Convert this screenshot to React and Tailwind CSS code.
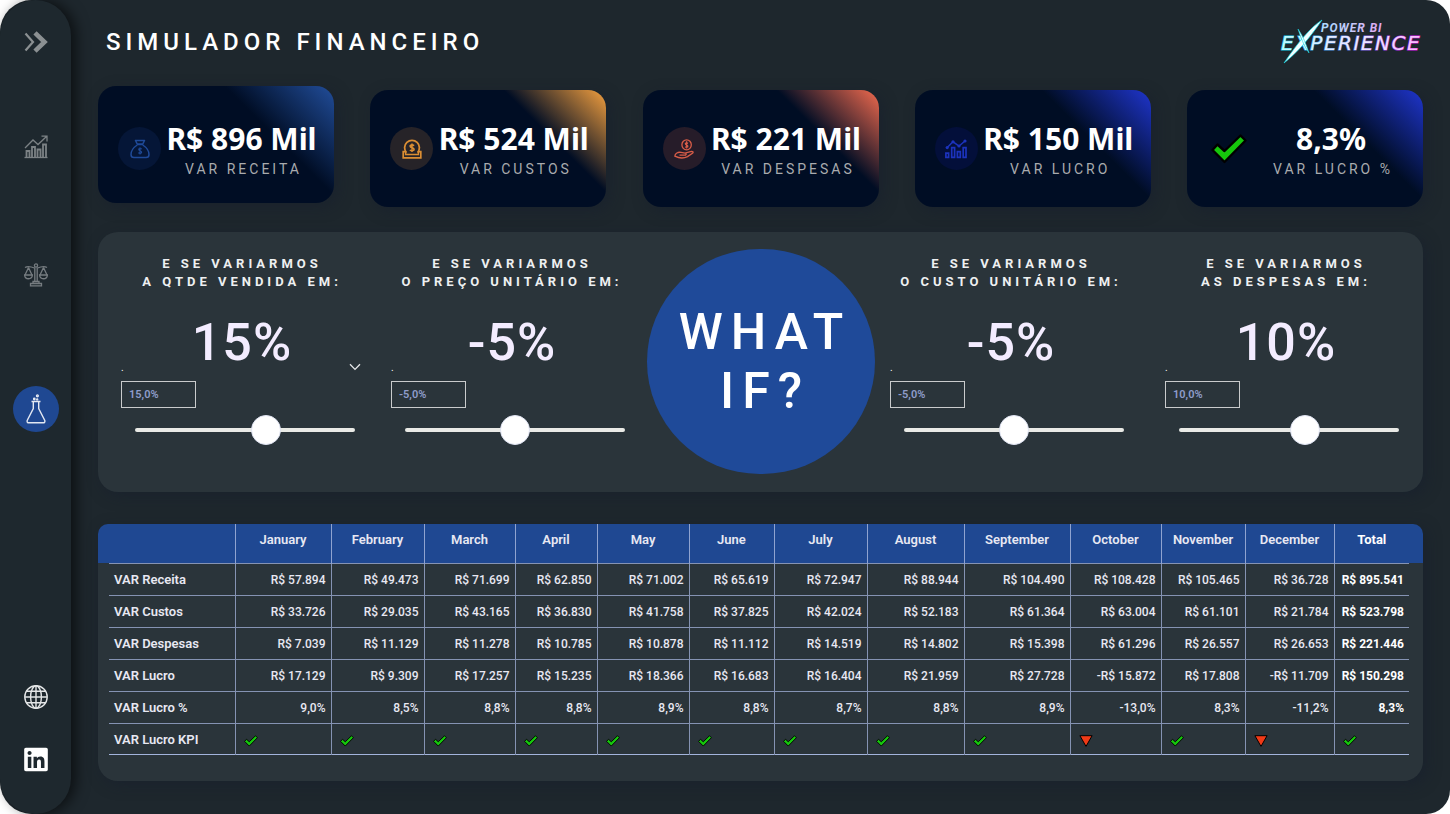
import React, { useState } from "react";
import { FaLinkedin } from "react-icons/fa";

/* ---------- icons ---------- */

function DoubleChevron() {
  return (
    <svg viewBox="0 0 24 22" className="h-[22px] w-6" fill="none" stroke="#8b9092">
      <path d="M1.5 2.5 L9 11 L1.5 19.5" strokeWidth="2.2" />
      <path d="M11 1.8 L20.5 11 L11 20.2" strokeWidth="4.6" />
    </svg>
  );
}

function GrowthIcon() {
  return (
    <svg viewBox="0 0 24 24" className="h-6 w-6" fill="none" stroke="#7c8285" strokeWidth="1.3">
      <path d="M0.5 22.5 H23.5" />
      <path d="M2.5 22 V16 H5.5 V22 M8 22 V12 H11 V22 M13.5 22 V14.5 H16.5 V22 M19 22 V9.5 H22 V22" strokeWidth="1.8" />
      <path d="M1 13 L9 5 L14 9.5 L22.5 1.5 M17.5 1.2 H23 V6.5" />
    </svg>
  );
}

function BalanceIcon() {
  return (
    <svg viewBox="0 0 24 24" className="h-6 w-6" fill="none" stroke="#767c80" strokeWidth="1.3">
      <circle cx="12" cy="2.5" r="1.6" />
      <path d="M10.8 4.5 V18 M13.2 4.5 V18 M9 18.5 H15 V20.5 H9 Z M6.5 20.5 H17.5 V22.8 H6.5 Z" />
      <path d="M1 4.5 C4 2.5 7 3.5 10.5 5 M23 4.5 C20 2.5 17 3.5 13.5 5" />
      <path d="M4.5 4.5 L1 12 M4.5 4.5 L8 12 M19.5 4.5 L16 12 M19.5 4.5 L23 12" />
      <path d="M0.6 12 H8.4 C8 17 1 17 0.6 12 Z M15.6 12 H23.4 C23 17 16 17 15.6 12 Z" />
    </svg>
  );
}

function FlaskIcon() {
  return (
    <svg viewBox="0 0 24 32" className="h-8 w-6" fill="none" stroke="#e3e8f2" strokeWidth="1.4">
      <path d="M7.5 8.5 H16.5 M9.3 9 V15.5 L3.2 27.5 Q2.6 29.8 5 29.8 H19 Q21.4 29.8 20.8 27.5 L14.7 15.5 V9" />
      <circle cx="10.3" cy="6" r="0.7" />
      <circle cx="13.4" cy="2.8" r="0.9" />
      <circle cx="13.2" cy="6.4" r="0.5" />
    </svg>
  );
}

function GlobeIcon() {
  return (
    <svg viewBox="0 0 24 24" className="h-6 w-6" fill="none" stroke="#e4e6e7" strokeWidth="1.4">
      <circle cx="12" cy="12" r="11.2" />
      <ellipse cx="12" cy="12" rx="5.4" ry="11.2" />
      <path d="M12 0.8 V23.2 M0.8 12 H23.2 M2.5 6.2 H21.5 M2.5 17.8 H21.5" />
    </svg>
  );
}

function MoneyBagIcon() {
  return (
    <svg viewBox="0 0 20 20" className="h-5 w-5" fill="none" stroke="#1f4a98" strokeWidth="1.5" strokeLinejoin="round">
      <path d="M5.5 1.5 H14.5 L12.8 5 H7.2 Z M6.8 5.6 H13.2" />
      <path d="M7.2 6 C3.5 8.5 1 12.5 1 15.5 Q1 18.6 4 18.6 H16 Q19 18.6 19 15.5 C19 12.5 16.5 8.5 12.8 6" />
      <path d="M11.8 10 Q10 8.9 8.7 10 C8 12.2 12 11.3 11.6 13.6 Q10.4 15 8.3 13.8 M10 8.3 V15.6" strokeWidth="1.1" />
    </svg>
  );
}

function CoinSlotIcon() {
  return (
    <svg viewBox="0 0 20 20" className="h-5 w-5" fill="none" stroke="#db8e33" strokeWidth="1.5">
      <path d="M4.4 13.6 A7.4 7.4 0 1 1 15.6 13.6" strokeWidth="1.8" />
      <path d="M3 12.6 H1.2 V18.8 H18.8 V12.6 H17" strokeWidth="1.7" />
      <path d="M3.6 12.8 V15.5 H16.4 V12.8" />
      <path d="M12.2 6.6 Q10 5.2 8.2 6.5 C7.2 9.4 12.8 8.2 12 11 Q10.3 12.6 7.8 11.2 M10 4.4 V13" strokeWidth="1.5" />
    </svg>
  );
}

function HandCoinIcon() {
  return (
    <svg viewBox="0 0 20 20" className="h-5 w-5" fill="none" stroke="#d85d48" strokeWidth="1.3">
      <ellipse cx="12.6" cy="5.8" rx="4.7" ry="5" />
      <path d="M14 4.4 Q12.4 3.3 11.4 4.5 C11.2 6.6 14.4 5.8 13.8 7.8 Q12.6 8.8 11.2 7.8 M12.6 2.2 V9.6" strokeWidth="1.3" />
      <path d="M0.8 17.2 C1 14.2 4 12.8 7 13.4 L11 14.2 L17.5 12.4 Q19.8 12.4 18.8 14 L13.5 17.6 C10 19.4 5 19.2 0.8 17.2 Z M5.5 16.2 H11.5 L12.5 14.6" />
    </svg>
  );
}

function ProfitIcon() {
  return (
    <svg viewBox="0 0 22 20" className="h-5 w-[22px]" fill="none" stroke="#1c33bd" strokeWidth="1.5">
      <path d="M2 8.8 L8 2.8 L14 7 L20 2" />
      <g fill="#1c33bd" stroke="none">
        <circle cx="2.2" cy="8.6" r="1.6" />
        <circle cx="8" cy="2.8" r="1.6" />
        <circle cx="14" cy="7" r="1.6" />
        <circle cx="20" cy="2" r="1.6" />
      </g>
      <path d="M0.9 14.2 H3.6 V18.4 H0.9 Z M6.7 8.6 H9.6 V18.4 H6.7 Z M12.4 12.6 H15.3 V18.4 H12.4 Z M18.2 8.6 H21 V18.4 H18.2 Z" strokeWidth="1.7" />
    </svg>
  );
}

function Check({ className }) {
  return (
    <svg viewBox="0 0 36 30" className={className} role="img" aria-label="Acima da meta">
      <path d="M1.5 16 L6.5 10.5 L13.5 17 L29.5 1.5 L34.5 6.5 L13.5 28 Z" fill="#16c60c" stroke="#000000" strokeWidth="2.4" strokeLinejoin="round" />
    </svg>
  );
}

function DownTriangle() {
  return (
    <svg viewBox="0 0 14 12" className="h-3 w-3.5" role="img" aria-label="Abaixo da meta">
      <path d="M0.9 0.7 H13.1 L7 11.4 Z" fill="#f03a17" stroke="#000000" strokeWidth="1" />
    </svg>
  );
}

function Logo() {
  return (
    <svg viewBox="0 0 144 46" className="h-[46px] w-36" role="img" aria-label="Power BI Experience">
      <defs>
        <linearGradient id="neon" gradientUnits="userSpaceOnUse" x1="0" y1="0" x2="144" y2="0">
          <stop offset="0" stopColor="#b9fbff" />
          <stop offset="0.35" stopColor="#e4ecff" />
          <stop offset="0.7" stopColor="#efe2ff" />
          <stop offset="1" stopColor="#f9b8fb" />
        </linearGradient>
        <linearGradient id="glow" gradientUnits="userSpaceOnUse" x1="0" y1="0" x2="144" y2="0">
          <stop offset="0" stopColor="#12d8e6" />
          <stop offset="0.5" stopColor="#6a7fe0" />
          <stop offset="1" stopColor="#e808e8" />
        </linearGradient>
        <linearGradient id="tagline" gradientUnits="userSpaceOnUse" x1="41" y1="0" x2="102" y2="0">
          <stop offset="0" stopColor="#a9dcff" />
          <stop offset="0.6" stopColor="#c9c4f8" />
          <stop offset="1" stopColor="#e2a6f2" />
        </linearGradient>
      </defs>
      <text x="2" y="31" fontSize="20" fontFamily="'DejaVu Sans', sans-serif" fontStyle="italic" letterSpacing="1.5" fill="url(#neon)" stroke="url(#glow)" strokeWidth="1" paintOrder="stroke">EXPERIENCE</text>
      <text x="42" y="13" fontSize="12" fontFamily="Roboto, sans-serif" fontStyle="italic" fontWeight="700" letterSpacing="1" fill="url(#tagline)">POWER BI</text>
      <path d="M43 1 C32 8 20 22 5 44 C18 34 30 20 43 1 Z" fill="#f2ffff" stroke="#12d8e6" strokeWidth="0.7" />
      <path d="M19 10 C22 19 25 27 30 34 C27 25 24 17 19 10 Z" fill="#f2ffff" stroke="#12d8e6" strokeWidth="0.6" />
    </svg>
  );
}

/* ---------- data ---------- */

const cards = [
  { value: "R$ 896 Mil", label: "VAR RECEITA", Icon: MoneyBagIcon, disc: "bg-[#051637]", glow: "self-start pt-2 bg-[linear-gradient(45deg,#000d24_69%,#1e478f_97%)]" },
  { value: "R$ 524 Mil", label: "VAR CUSTOS", Icon: CoinSlotIcon, disc: "bg-[#262328]", glow: "self-end bg-[linear-gradient(45deg,#000d24_71%,#db913c_97%)]" },
  { value: "R$ 221 Mil", label: "VAR DESPESAS", Icon: HandCoinIcon, disc: "bg-[#261c29]", glow: "self-end bg-[linear-gradient(45deg,#000d24_71%,#d9614a_97%)]" },
  { value: "R$ 150 Mil", label: "VAR LUCRO", Icon: ProfitIcon, disc: "bg-[#030f3a]", glow: "self-end bg-[linear-gradient(45deg,#000d24_69%,#1c31bd_97%)]" },
  { value: "8,3%", label: "VAR LUCRO %", Icon: null, disc: "", glow: "self-end bg-[linear-gradient(45deg,#000d24_69%,#1c31bd_97%)]" },
];

const months = ["January", "February", "March", "April", "May", "June", "July", "August", "September", "October", "November", "December", "Total"];

const columnWidths = [
  "w-[126px]", "w-[96px]", "w-[93px]", "w-[91px]", "w-[82px]", "w-[92px]", "w-[85px]",
  "w-[93px]", "w-[97px]", "w-[106px]", "w-[91px]", "w-[84px]", "w-[89px]", "w-[75px]",
];

const rows = [
  ["VAR Receita", "R$ 57.894", "R$ 49.473", "R$ 71.699", "R$ 62.850", "R$ 71.002", "R$ 65.619", "R$ 72.947", "R$ 88.944", "R$ 104.490", "R$ 108.428", "R$ 105.465", "R$ 36.728", "R$ 895.541"],
  ["VAR Custos", "R$ 33.726", "R$ 29.035", "R$ 43.165", "R$ 36.830", "R$ 41.758", "R$ 37.825", "R$ 42.024", "R$ 52.183", "R$ 61.364", "R$ 63.004", "R$ 61.101", "R$ 21.784", "R$ 523.798"],
  ["VAR Despesas", "R$ 7.039", "R$ 11.129", "R$ 11.278", "R$ 10.785", "R$ 10.878", "R$ 11.112", "R$ 14.519", "R$ 14.802", "R$ 15.398", "R$ 61.296", "R$ 26.557", "R$ 26.653", "R$ 221.446"],
  ["VAR Lucro", "R$ 17.129", "R$ 9.309", "R$ 17.257", "R$ 15.235", "R$ 18.366", "R$ 16.683", "R$ 16.404", "R$ 21.959", "R$ 27.728", "-R$ 15.872", "R$ 17.808", "-R$ 11.709", "R$ 150.298"],
  ["VAR Lucro %", "9,0%", "8,5%", "8,8%", "8,8%", "8,9%", "8,8%", "8,7%", "8,8%", "8,9%", "-13,0%", "8,3%", "-11,2%", "8,3%"],
];

const kpi = [true, true, true, true, true, true, true, true, true, false, true, false, true];

/* ---------- parts ---------- */

function NavButton({ label, active, children }) {
  return (
    <button
      type="button"
      aria-label={label}
      className={
        active
          ? "flex h-[46px] w-[46px] items-center justify-center rounded-full bg-[#1f4892]"
          : "flex h-[46px] w-[46px] items-center justify-center rounded-full"
      }
    >
      {children}
    </button>
  );
}

function Card({ value, label, Icon, disc, glow }) {
  return (
    <article className={`flex h-[117px] w-[236px] items-center rounded-[18px] pl-5 pr-3 shadow-[4px_4px_14px_rgba(22,30,46,0.5)] ${glow}`}>
      {Icon ? (
        <span className={`flex h-[43px] w-[43px] shrink-0 items-center justify-center rounded-full ${disc}`}>
          <Icon />
        </span>
      ) : (
        <Check className="ml-1 mr-1 h-[30px] w-9 shrink-0" />
      )}
      <div className="flex grow flex-col items-center pt-1 whitespace-nowrap">
        <p className="font-['Noto_Sans',sans-serif] text-[30px] leading-9 font-bold text-white">{value}</p>
        <p className="pl-1 text-sm leading-6 tracking-[3px] text-[#a9abae]">{label}</p>
      </div>
    </article>
  );
}

function Scenario({ id, first, second, initial, expandable }) {
  const [amount, setAmount] = useState(initial);
  return (
    <section className="flex w-full max-w-[242px] flex-col">
      <h2 className="pt-[23px] text-center text-[13px] leading-[18px] font-bold tracking-[4px] whitespace-nowrap text-[#eef0f1]">
        {first}
        <br />
        {second}
      </h2>
      <p className="mt-7 text-center text-[52px] leading-[48px] font-medium tracking-[1px] text-[#f3ecff]">{amount}%</p>
      <div className="-mt-2 flex h-4 items-end justify-between">
        <label htmlFor={`${id}-value`} className="text-[10px] leading-[14px] text-white">.</label>
        {expandable && (
          <button type="button" aria-label="Opções" className="mr-0.5 flex h-4 w-3 items-center justify-center">
            <svg viewBox="0 0 12 8" className="h-2 w-3" fill="none" stroke="#e6e8ea" strokeWidth="1.3">
              <path d="M1 1.2 L6 6.4 L11 1.2" />
            </svg>
          </button>
        )}
      </div>
      <input
        id={`${id}-value`}
        readOnly
        value={`${amount},0%`}
        className="mt-1.5 h-[27px] w-[75px] border border-[#c9cbcc] bg-transparent px-[7px] text-[11px] font-semibold text-[#8f9dcb] outline-none"
      />
      <input
        type="range"
        aria-label={`${first} ${second}`}
        min="-95"
        max="85"
        value={amount}
        onChange={(e) => setAmount(Number(e.target.value))}
        className="mt-[7px] mr-2 ml-3.5 h-[30px] appearance-none bg-transparent [&::-webkit-slider-runnable-track]:h-1 [&::-webkit-slider-runnable-track]:rounded-full [&::-webkit-slider-runnable-track]:bg-[#e9eae6] [&::-webkit-slider-thumb]:-mt-[13px] [&::-webkit-slider-thumb]:h-[30px] [&::-webkit-slider-thumb]:w-[30px] [&::-webkit-slider-thumb]:appearance-none [&::-webkit-slider-thumb]:rounded-full [&::-webkit-slider-thumb]:border [&::-webkit-slider-thumb]:border-[#dfe3f2] [&::-webkit-slider-thumb]:bg-white"
      />
    </section>
  );
}

function ResultsTable() {
  return (
    <section className="mt-8 rounded-t-[10px] rounded-b-[20px] bg-[linear-gradient(#1f4892_39px,#2a343a_39px)] pr-3.5 pb-[26px] pl-[11px] shadow-[4px_4px_14px_rgba(22,30,46,0.5)]">
      <table className="w-full table-fixed border-collapse whitespace-nowrap text-[#e8e8f2]">
        <colgroup>
          {columnWidths.map((w, i) => (
            <col key={i} className={w} />
          ))}
        </colgroup>
        <thead>
          <tr className="h-[39px] border-b border-[#8593b3]">
            <th scope="col" aria-label="Indicador" />
            {months.map((m) => (
              <th key={m} scope="col" className={`border-l border-[#8fa3d0] pt-1.5 align-top text-[13px] leading-5 ${m === "Total" ? "font-bold text-white" : "font-semibold"}`}>
                {m}
              </th>
            ))}
          </tr>
        </thead>
        <tbody>
          {rows.map(([name, ...cells]) => (
            <tr key={name} className="h-8 border-b border-[#8593b3]">
              <th scope="row" className="pt-0.5 pl-[5px] text-left text-[13px] font-semibold">{name}</th>
              {cells.map((c, i) => (
                <td key={i} className={`border-l border-[#8593b3] pt-0.5 pr-[5px] text-right text-xs ${i === 12 ? "font-bold text-white" : "font-medium"}`}>
                  {c}
                </td>
              ))}
            </tr>
          ))}
          <tr className="h-[31px] border-b border-[#a3b4dc]">
            <th scope="row" className="pt-0.5 pl-[5px] text-left text-[13px] font-semibold">VAR Lucro KPI</th>
            {kpi.map((ok, i) => (
              <td key={i} className="border-l border-[#8593b3] pt-1 pl-2">
                {ok ? <Check className="h-3 w-3.5" /> : <DownTriangle />}
              </td>
            ))}
          </tr>
        </tbody>
      </table>
    </section>
  );
}

export default function App() {
  return (
    <div className="min-h-screen bg-white font-[Roboto,sans-serif]">
      <div className="flex min-h-screen rounded-l-[32px] rounded-r-[24px] bg-[#1e272d]">
        <nav aria-label="Navegação" className="flex w-[71px] shrink-0 flex-col items-center rounded-[36px] bg-[#1e282e] pt-[19px] pb-8 shadow-[5px_0_14px_rgba(0,0,0,0.6)]">
          <NavButton label="Expandir menu"><DoubleChevron /></NavButton>
          <div className="mt-[59px]"><NavButton label="Resultados"><GrowthIcon /></NavButton></div>
          <div className="mt-[82px]"><NavButton label="Balanço"><BalanceIcon /></NavButton></div>
          <div className="mt-[88px]"><NavButton label="Simulador" active><FlaskIcon /></NavButton></div>
          <div className="mt-auto flex flex-col gap-4">
            <a href="#site" aria-label="Site" className="flex h-[46px] w-[46px] items-center justify-center"><GlobeIcon /></a>
            <a href="#linkedin" aria-label="LinkedIn" className="flex h-[46px] w-[46px] items-center justify-center">
              <FaLinkedin className="h-[27px] w-6 text-white" />
            </a>
          </div>
        </nav>

        <main className="min-w-0 grow pt-5 pr-[27px] pb-8 pl-[27px]">
          <header className="flex h-11 items-center justify-between pl-2">
            <h1 className="text-2xl font-medium tracking-[5px] text-white">SIMULADOR FINANCEIRO</h1>
            <Logo />
          </header>

          <div className="mt-[22px] flex h-[121px] justify-between">
            {cards.map((card) => (
              <Card key={card.label} {...card} />
            ))}
          </div>

          <div className="mt-[25px] grid h-[260px] grid-cols-[270fr_256fr_243fr_275fr_242fr] rounded-[20px] bg-[#2a343a] pr-4 pl-[23px] shadow-[4px_4px_14px_rgba(22,30,46,0.5)]">
            <Scenario id="qtde" first="E SE VARIARMOS" second="A QTDE VENDIDA EM:" initial={15} expandable />
            <Scenario id="preco" first="E SE VARIARMOS" second="O PREÇO UNITÁRIO EM:" initial={-5} />
            <div className="mt-[17px] flex h-[225px] w-[228px] items-center justify-center rounded-full bg-[#1f4a99] pl-2 text-center text-[50px] leading-[59px] font-medium tracking-[8px] text-white">
              WHAT
              <br />
              IF?
            </div>
            <Scenario id="custo" first="E SE VARIARMOS" second="O CUSTO UNITÁRIO EM:" initial={-5} />
            <Scenario id="despesas" first="E SE VARIARMOS" second="AS DESPESAS EM:" initial={10} />
          </div>

          <ResultsTable />
        </main>
      </div>
    </div>
  );
}
